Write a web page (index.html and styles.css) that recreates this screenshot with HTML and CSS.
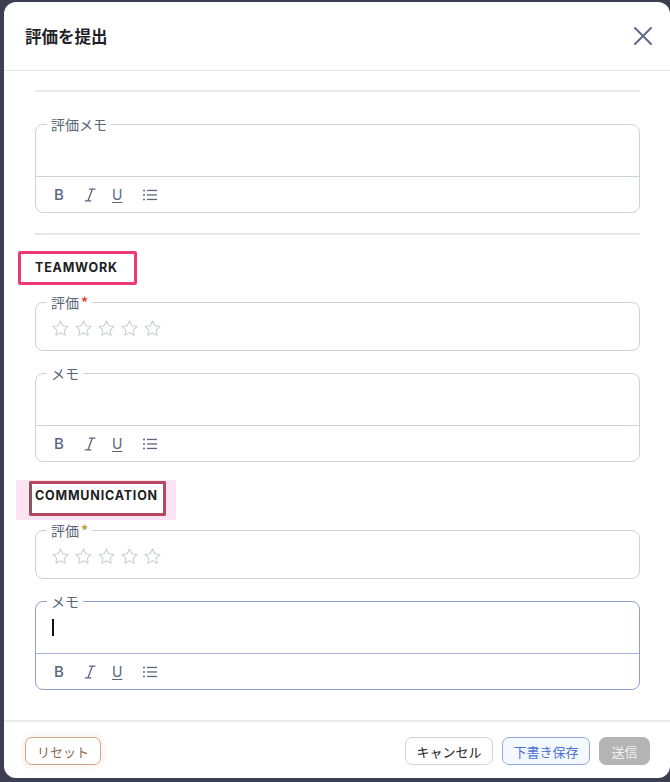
FILE: index.html
```html
<!DOCTYPE html>
<html lang="ja">
<head>
<meta charset="utf-8">
<title>評価を提出</title>
<link rel="stylesheet" href="styles.css">
</head>
<body>
<div class="modal">
  <header class="modal-header">
    <h1 class="modal-title">評価を提出</h1>
    <button class="close-btn" aria-label="閉じる">
      <svg width="20" height="20" viewBox="0 0 20 20"><path d="M2 2L18 18M18 2L2 18" stroke="#5b6b86" stroke-width="2" stroke-linecap="round" fill="none"/></svg>
    </button>
  </header>
  <div class="modal-body">
    <hr class="divider first">
    <fieldset class="field">
      <legend>評価メモ</legend>
      <div class="editor"></div>
      <div class="toolbar">
        <span class="tb tb-b">B</span>
        <span class="tb tb-i"><svg width="12" height="14" viewBox="0 0 12 14"><path d="M5 1.2H11.5M0.8 12.8H7.3M8.3 1.2L4 12.8" stroke="#5a6680" stroke-width="1.3" fill="none"/></svg></span>
        <span class="tb tb-u">U</span>
        <span class="tb tb-list"><svg width="16" height="14" viewBox="0 0 16 14"><g fill="#5a6680"><circle cx="2" cy="2.5" r="1"/><circle cx="2" cy="7" r="1"/><circle cx="2" cy="11.5" r="1"/><rect x="5" y="1.8" width="10" height="1.3"/><rect x="5" y="6.3" width="10" height="1.3"/><rect x="5" y="10.8" width="10" height="1.3"/></g></svg></span>
      </div>
    </fieldset>
    <hr class="divider">

    <div class="section-head hl-pink">TEAMWORK</div>
    <fieldset class="field rating">
      <legend>評価<span class="req red">*</span></legend>
      <div class="stars">
        <svg class="star" viewBox="0 0 24 24"><path d="M12 2.5l2.9 6 6.6.9-4.8 4.6 1.2 6.5L12 17.4l-5.9 3.1 1.2-6.5-4.8-4.6 6.6-.9z"/></svg>
        <svg class="star" viewBox="0 0 24 24"><path d="M12 2.5l2.9 6 6.6.9-4.8 4.6 1.2 6.5L12 17.4l-5.9 3.1 1.2-6.5-4.8-4.6 6.6-.9z"/></svg>
        <svg class="star" viewBox="0 0 24 24"><path d="M12 2.5l2.9 6 6.6.9-4.8 4.6 1.2 6.5L12 17.4l-5.9 3.1 1.2-6.5-4.8-4.6 6.6-.9z"/></svg>
        <svg class="star" viewBox="0 0 24 24"><path d="M12 2.5l2.9 6 6.6.9-4.8 4.6 1.2 6.5L12 17.4l-5.9 3.1 1.2-6.5-4.8-4.6 6.6-.9z"/></svg>
        <svg class="star" viewBox="0 0 24 24"><path d="M12 2.5l2.9 6 6.6.9-4.8 4.6 1.2 6.5L12 17.4l-5.9 3.1 1.2-6.5-4.8-4.6 6.6-.9z"/></svg>
      </div>
    </fieldset>
    <fieldset class="field">
      <legend>メモ</legend>
      <div class="editor"></div>
      <div class="toolbar">
        <span class="tb tb-b">B</span>
        <span class="tb tb-i"><svg width="12" height="14" viewBox="0 0 12 14"><path d="M5 1.2H11.5M0.8 12.8H7.3M8.3 1.2L4 12.8" stroke="#5a6680" stroke-width="1.3" fill="none"/></svg></span>
        <span class="tb tb-u">U</span>
        <span class="tb tb-list"><svg width="16" height="14" viewBox="0 0 16 14"><g fill="#5a6680"><circle cx="2" cy="2.5" r="1"/><circle cx="2" cy="7" r="1"/><circle cx="2" cy="11.5" r="1"/><rect x="5" y="1.8" width="10" height="1.3"/><rect x="5" y="6.3" width="10" height="1.3"/><rect x="5" y="10.8" width="10" height="1.3"/></g></svg></span>
      </div>
    </fieldset>

    <div class="section-head hl-dark">COMMUNICATION</div>
    <fieldset class="field rating">
      <legend>評価<span class="req gold">*</span></legend>
      <div class="stars">
        <svg class="star" viewBox="0 0 24 24"><path d="M12 2.5l2.9 6 6.6.9-4.8 4.6 1.2 6.5L12 17.4l-5.9 3.1 1.2-6.5-4.8-4.6 6.6-.9z"/></svg>
        <svg class="star" viewBox="0 0 24 24"><path d="M12 2.5l2.9 6 6.6.9-4.8 4.6 1.2 6.5L12 17.4l-5.9 3.1 1.2-6.5-4.8-4.6 6.6-.9z"/></svg>
        <svg class="star" viewBox="0 0 24 24"><path d="M12 2.5l2.9 6 6.6.9-4.8 4.6 1.2 6.5L12 17.4l-5.9 3.1 1.2-6.5-4.8-4.6 6.6-.9z"/></svg>
        <svg class="star" viewBox="0 0 24 24"><path d="M12 2.5l2.9 6 6.6.9-4.8 4.6 1.2 6.5L12 17.4l-5.9 3.1 1.2-6.5-4.8-4.6 6.6-.9z"/></svg>
        <svg class="star" viewBox="0 0 24 24"><path d="M12 2.5l2.9 6 6.6.9-4.8 4.6 1.2 6.5L12 17.4l-5.9 3.1 1.2-6.5-4.8-4.6 6.6-.9z"/></svg>
      </div>
    </fieldset>
    <fieldset class="field focused">
      <legend>メモ</legend>
      <div class="editor"><span class="caret"></span></div>
      <div class="toolbar">
        <span class="tb tb-b">B</span>
        <span class="tb tb-i"><svg width="12" height="14" viewBox="0 0 12 14"><path d="M5 1.2H11.5M0.8 12.8H7.3M8.3 1.2L4 12.8" stroke="#5a6680" stroke-width="1.3" fill="none"/></svg></span>
        <span class="tb tb-u">U</span>
        <span class="tb tb-list"><svg width="16" height="14" viewBox="0 0 16 14"><g fill="#5a6680"><circle cx="2" cy="2.5" r="1"/><circle cx="2" cy="7" r="1"/><circle cx="2" cy="11.5" r="1"/><rect x="5" y="1.8" width="10" height="1.3"/><rect x="5" y="6.3" width="10" height="1.3"/><rect x="5" y="10.8" width="10" height="1.3"/></g></svg></span>
      </div>
    </fieldset>
  </div>
  <footer class="modal-footer">
    <button class="btn btn-reset">リセット</button>
    <div class="footer-right">
      <button class="btn btn-cancel">キャンセル</button>
      <button class="btn btn-draft">下書き保存</button>
      <button class="btn btn-submit">送信</button>
    </div>
  </footer>
</div>
</body>
</html>
```
FILE: styles.css
```css
*, *::before, *::after { box-sizing: border-box; }
html, body { margin: 0; padding: 0; }
body {
  width: 670px;
  height: 782px;
  overflow: hidden;
  background: #3c3e52;
  padding: 2px 0 0 4px;
  font-family: "Noto Sans CJK JP", "Noto Sans", sans-serif;
}
.modal {
  width: 666px;
  height: 776px;
  background: #fff;
  border-radius: 12px;
  display: flex;
  flex-direction: column;
  overflow: hidden;
}
.modal-header {
  height: 69px;
  flex: none;
  border-bottom: 1px solid #e4e7ea;
  display: flex;
  align-items: center;
  justify-content: space-between;
  padding: 0 17px 0 21px;
}
.modal-title {
  margin: 0;
  font-size: 16.5px;
  font-weight: 700;
  color: #1f2328;
}
.close-btn {
  border: 0;
  background: none;
  padding: 0;
  width: 20px;
  height: 20px;
  display: flex;
}
.modal-body {
  flex: 1;
  overflow: hidden;
  padding: 0 30px 0 31px;
}
.divider {
  border: 0;
  height: 2px;
  background: #e6e8eb;
  margin: 0 0 24px;
}
.divider.first { margin-top: 19px; }
.field + .divider { margin-top: 20px; margin-bottom: 0; }
.field {
  margin: 0;
  padding: 0;
  min-width: 0;
  border: 1px solid #cdd2d9;
  border-radius: 8px;
}
.field legend {
  margin-left: 11px;
  padding: 0 4px;
  font-size: 14px;
  line-height: 16px;
  color: #5b6677;
}
.req { margin-left: 2px; font-size: 14px; font-weight: 700; }
.req.red { color: #e8423a; }
.req.gold { color: #b6a13c; }
.field + .field { margin-top: 14px; }
.editor {
  height: 45px;
  border-bottom: 1px solid #cdd2d9;
  padding: 8px 16px;
}
.caret {
  display: block;
  width: 1.5px;
  height: 17px;
  background: #111;
  margin-top: 2px;
}
.toolbar {
  height: 35px;
  display: flex;
  align-items: center;
  padding-left: 17px;
}
.tb {
  width: 29.5px;
  color: #5a6680;
  font-size: 15px;
  line-height: 1;
  display: flex;
  align-items: center;
}
.tb-b { font-family: "Inter", "Liberation Sans", sans-serif; font-weight: 500; padding-left: 1px; }
.tb-i { padding-left: 1px; }
.tb-u { font-family: "Inter", "Liberation Sans", sans-serif; text-decoration: underline; text-underline-offset: 2px; text-decoration-thickness: 1.2px; font-size: 14px; }
.tb-list { padding-top: 1px; }
.focused { border-color: #8f9fcf; }
.focused .editor { border-bottom-color: #a7b3d6; }

.section-head {
  position: relative;
  margin: 24px 0 16px;
  height: 20px;
  line-height: 20px;
  font-family: "Inter", "Noto Sans", sans-serif;
  font-weight: 700;
  font-size: 12.5px;
  letter-spacing: 0.8px;
  color: #1c1d22;
  z-index: 0;
}
.divider + .section-head { margin-top: 23px; }
.field.rating .stars {
  display: flex;
  gap: 4px;
  padding: 9px 15px 12px;
}
.star {
  width: 19px;
  height: 19px;
  fill: none;
  stroke: #c9cdd3;
  stroke-width: 1.3;
  stroke-linejoin: round;
}
.hl-pink::before {
  content: "";
  position: absolute;
  left: -17px;
  top: -7px;
  width: 119px;
  height: 34px;
  border: 3px solid #ec3a74;
  border-radius: 2px;
}
.hl-dark::after {
  content: "";
  position: absolute;
  left: -19px;
  top: -6px;
  width: 160px;
  height: 40px;
  background: #fce4f3;
  z-index: -2;
}
.hl-dark::before {
  content: "";
  position: absolute;
  left: -6px;
  top: -5px;
  width: 137px;
  height: 35px;
  background: #fff;
  border: 3px solid #b8485f;
  border-left-color: #8a5561;
  border-radius: 2px;
  z-index: -1;
}

.modal-footer {
  flex: none;
  height: 58px;
  border-top: 2px solid #e8eaee;
  display: flex;
  justify-content: space-between;
  padding: 15px 20px 0 21px;
}
.footer-right { display: flex; gap: 9px; }
.btn {
  height: 28px;
  border-radius: 7px;
  font-family: "Noto Sans CJK JP", sans-serif;
  font-size: 13px;
  line-height: 1;
  padding: 0;
  white-space: nowrap;
  background: #fff;
  border: 1px solid #ccc;
}
.btn-reset {
  width: 76px;
  color: #8c6a49;
  border-color: #c9a580;
  box-shadow: 0 0 0 4px #fdf8f8;
}
.btn-cancel {
  width: 88px;
  color: #1f2328;
  border-color: #cfd3d9;
}
.btn-draft {
  width: 88px;
  color: #4a72d6;
  border-color: #93a8e2;
  background: #f4f9ff;
}
.btn-submit {
  width: 51px;
  color: #f2f2f2;
  background: #b4b4b4;
  border-color: #b4b4b4;
}
```
